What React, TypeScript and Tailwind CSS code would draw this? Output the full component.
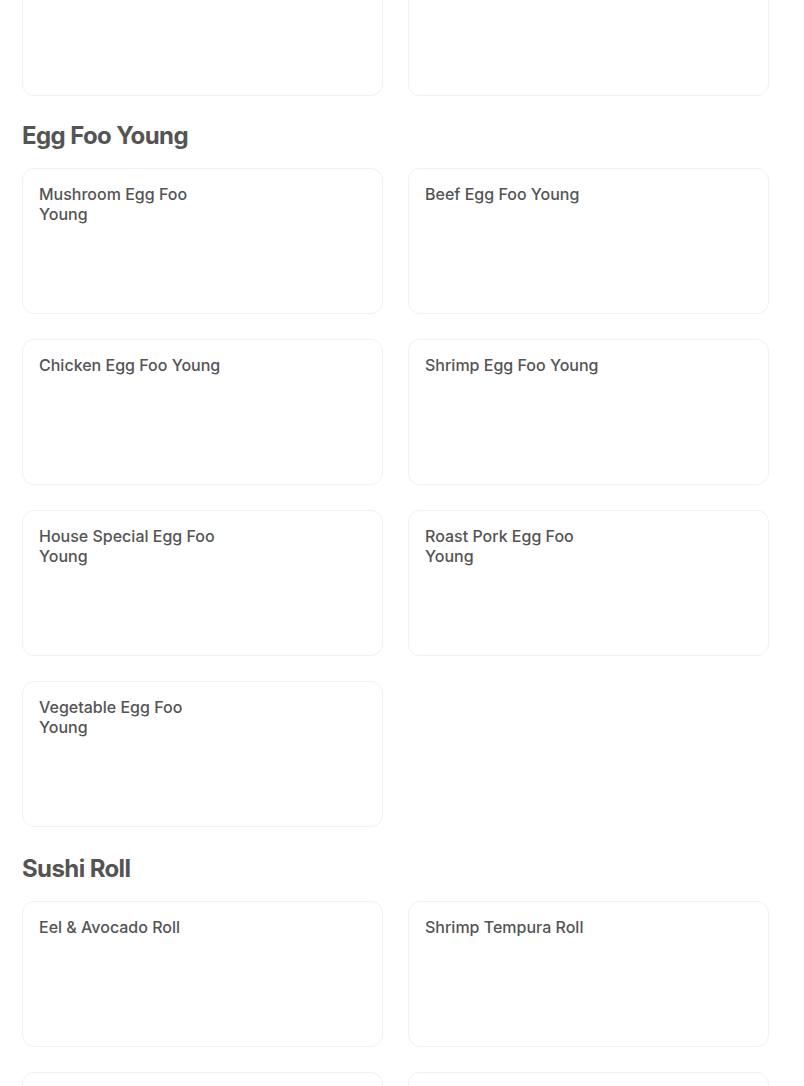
const sections = [
  { title: "", spacing: "", items: ["", ""] },
  {
    title: "Egg Foo Young",
    spacing: "mt-[24px]",
    items: [
      "Mushroom Egg Foo Young",
      "Beef Egg Foo Young",
      "Chicken Egg Foo Young",
      "Shrimp Egg Foo Young",
      "House Special Egg Foo Young",
      "Roast Pork Egg Foo Young",
      "Vegetable Egg Foo Young",
    ],
  },
  {
    title: "Sushi Roll",
    spacing: "mt-[26px]",
    items: [
      "Eel & Avocado Roll",
      "Shrimp Tempura Roll",
      "Spicy Tuna Roll",
      "Salmon Avocado Roll",
    ],
  },
];

const MenuCard = ({ name }: { name: string }) => (
  <div className="h-[146px] rounded-xl border border-[#f1f1f1] bg-white px-4 pt-[15px]">
    <p className="w-[190px] text-[16px] leading-5 font-medium text-[#545454]">
      {name}
    </p>
  </div>
);

const App = () => {
  return (
    <div
      className="h-[1086px] overflow-hidden bg-white pl-[22px] pr-[35px]"
      style={{ fontFamily: "Inter, 'Noto Sans', sans-serif" }}
    >
      <div className="-mt-[50px]">
        {sections.map((section, i) => (
          <section key={i}>
            {section.title && (
              <h2
                className={`${section.spacing} mb-[16px] h-8 text-[24px] leading-8 font-bold tracking-[-0.6px] text-[#545454]`}
              >
                {section.title}
              </h2>
            )}
            <div className="grid grid-cols-2 gap-[25px]">
              {section.items.map((item, j) => (
                <MenuCard key={j} name={item} />
              ))}
            </div>
          </section>
        ))}
      </div>
    </div>
  );
};

export default App;
